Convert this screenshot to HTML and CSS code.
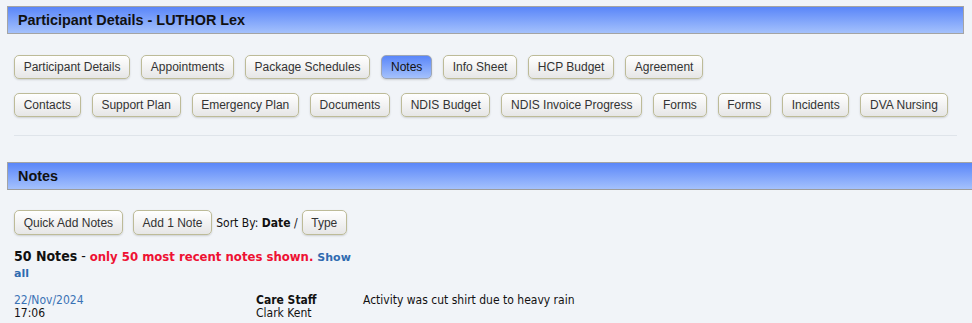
FILE: index.html
```html
<!DOCTYPE html>
<html lang="en">
<head>
  <meta charset="UTF-8" />
  <title>Participant Details</title>
  <link rel="stylesheet" href="styles.css">
</head>
<body>

<div class="panel-head">Participant Details - LUTHOR Lex</div>

<div class="tabs">
  <div class="tab-row">
    <button class="btn">Participant Details</button>
    <button class="btn">Appointments</button>
    <button class="btn">Package Schedules</button>
    <button class="btn active">Notes</button>
    <button class="btn">Info Sheet</button>
    <button class="btn">HCP Budget</button>
    <button class="btn">Agreement</button>
  </div>
  <div class="tab-row">
    <button class="btn">Contacts</button>
    <button class="btn">Support Plan</button>
    <button class="btn">Emergency Plan</button>
    <button class="btn">Documents</button>
    <button class="btn">NDIS Budget</button>
    <button class="btn">NDIS Invoice Progress</button>
    <button class="btn">Forms</button>
    <button class="btn">Forms</button>
    <button class="btn">Incidents</button>
    <button class="btn">DVA Nursing</button>
  </div>
</div>

<div class="divider"></div>

<div class="panel-head wide">Notes</div>

<div class="notes">
  <div class="toolbar">
    <button class="btn tall">Quick Add Notes</button>
    <button class="btn tall">Add 1 Note</button>
    <span class="sort">Sort By: <b>Date</b> /</span>
    <button class="btn tall">Type</button>
  </div>

  <div class="count">
    <b>50 Notes</b> - <span class="warn">only 50 most recent notes shown.</span>
    <a href="#" class="show-all">Show</a><br><a href="#" class="show-all">all</a>
  </div>

  <div class="note">
    <div class="when">
      <a href="#">22/Nov/2024</a><br>17:06
    </div>
    <div class="who">
      <b>Care Staff</b><br>Clark Kent
    </div>
    <div class="what">Activity was cut shirt due to heavy rain</div>
  </div>
</div>

</body>
</html>
```

FILE: styles.css
```css
html, body {
  overflow: hidden;
}

body {
  margin: 0;
  padding: 6px 8px 0 7px;
  background: #f1f4f8;
  font-family: 'Liberation Sans', Arial, sans-serif;
  color: #222;
}

.panel-head {
  height: 26px;
  line-height: 26px;
  padding-left: 10px;
  border: 1px solid #a4a4a4;
  background: linear-gradient(to bottom, #5a86f9, #a4c1fc);
  font-size: 14.4px;
  font-weight: bold;
  color: #111;
}

.panel-head.wide {
  margin-right: -30px;
  border-bottom-color: #9c9c9c;
}

.tabs {
  display: flex;
  flex-direction: column;
  gap: 14px;
  padding: 21px 0 0 7px;
}

.tab-row {
  display: flex;
  gap: 11px;
}

.btn {
  flex-shrink: 0;
  height: 24px;
  padding: 0 8.7px;
  border: 1px solid #bdbb98;
  border-radius: 5px;
  background: linear-gradient(to bottom, #ffffff, #e6e6e6);
  box-shadow: 0 1px 2px rgba(0, 0, 0, 0.15);
  font-family: 'Liberation Sans', Arial, sans-serif;
  font-size: 12px;
  white-space: nowrap;
  color: #333;
  cursor: pointer;
}

.btn.active {
  background: linear-gradient(to bottom, #5a86f9, #a4c1fc);
  border-color: #9ea6b4;
  color: #111;
}

.btn.tall {
  height: 25px;
}

.divider {
  height: 1px;
  margin: 18px 7px 26px 7px;
  background: #dfe4ea;
}

.notes {
  padding: 20px 0 0 7px;
  font-family: 'DejaVu Sans Condensed', 'DejaVu Sans', sans-serif;
}

.toolbar {
  display: flex;
  align-items: center;
  gap: 10px;
}

.sort {
  margin: 0 -6px;
  font-size: 12px;
  color: #111;
}

.count {
  width: 350px;
  margin-top: 14px;
  font-size: 14px;
  line-height: 14px;
  color: #111;
}

.warn {
  font-size: 13px;
  font-weight: bold;
  color: #ee1133;
}

.show-all {
  font-family: 'DejaVu Sans', sans-serif;
  font-size: 11px;
  font-weight: bold;
  line-height: 14px;
  color: #2f6bb0;
  text-decoration: none;
}

.note {
  display: flex;
  margin-top: 13px;
  font-size: 12px;
  line-height: 13px;
  color: #111;
}

.when {
  width: 242px;
}

.when a {
  color: #3a72b5;
  text-decoration: none;
}

.who {
  width: 107px;
}
```
